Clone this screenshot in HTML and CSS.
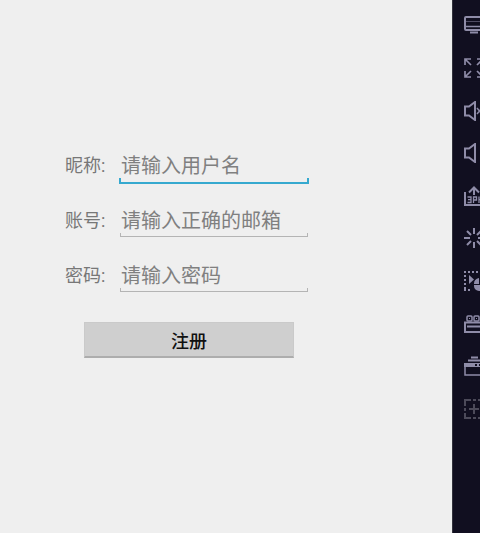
FILE: index.html
```html
<!DOCTYPE html>
<html lang="zh-CN">

<head>
  <meta charset="utf-8">
  <title>注册</title>
  <link rel="stylesheet" href="styles.css">
</head>

<body>
  <main class="screen">
    <form class="register">
      <div class="row">
        <label for="nickname">昵称:</label>
        <input class="active" type="text" id="nickname" name="nickname" placeholder="请输入用户名">
      </div>
      <div class="row">
        <label for="account">账号:</label>
        <input type="email" id="account" name="account" placeholder="请输入正确的邮箱">
      </div>
      <div class="row">
        <label for="password">密码:</label>
        <input type="password" id="password" name="password" placeholder="请输入密码">
      </div>
      <button class="submit" type="submit">注册</button>
    </form>
  </main>

  <!-- emulator toolbar -->
  <nav class="toolbar">
    <button class="tool" type="button" aria-label="键盘">
      <svg viewBox="0 0 20 20"><rect x="1" y="2" width="18" height="13" rx="1"/><path d="M2 6.500h16" stroke-width="1" opacity="0.5"/><path d="M2 11.500h16" stroke-width="1.500"/><path d="M6 17.500h8"/></svg>
    </button>
    <button class="tool" type="button" aria-label="全屏">
      <svg viewBox="0 0 20 20"><path d="M1 7V1h6M1 1l6 6M13 1h6v6M19 1l-6 6M1 13v6h6M1 19l6-6M19 13v6h-6M19 19l-6-6" stroke-width="1.700"/></svg>
    </button>
    <button class="tool" type="button" aria-label="音量加">
      <svg viewBox="0 0 20 20"><path d="M1 5.500h4l6-4.500v18l-6-4.500H1z"/><path d="M13 7l5 6M18 7l-5 6" stroke-width="1.500"/></svg>
    </button>
    <button class="tool" type="button" aria-label="音量减">
      <svg viewBox="0 0 20 20"><path d="M1 5.500h4l6-4.500v18l-6-4.500H1z"/><path d="M17 10h3"/></svg>
    </button>
    <button class="tool" type="button" aria-label="安装应用">
      <svg viewBox="0 0 20 20"><path d="M1 6v13h18V6M10 9V2M5 6.500L10 1.500l5 5"/><path d="M3.500 11H7v5.500H3.500M4 13.700h3M9.500 17v-6h3v3h-3M15 10.500V17M15 13.700h3.500" stroke-width="1.300"/></svg>
    </button>
    <button class="tool" type="button" aria-label="刷新">
      <svg viewBox="0 0 20 20"><path d="M10 0v6M10 14v6M0 10h6M14 10h6M3 3l4 4M17 3l-4 4M3 17l4-4M17 17l-4-4"/></svg>
    </button>
    <button class="tool" type="button" aria-label="录制操作">
      <svg viewBox="0 0 20 20"><path d="M0 1h20M0 19h8" stroke-dasharray="2 2"/><path d="M1 4v14" stroke-dasharray="2 2"/><path class="solid" d="M5 4l5 4.500L5 13z"/><path class="solid" d="M15 7v6h-5a6 6 0 0 1 5-6zM10 14h10v1a5 5 0 0 1-10 0zM16 7a6 6 0 0 1 4 6h-4z"/></svg>
    </button>
    <button class="tool" type="button" aria-label="录像">
      <svg viewBox="0 0 20 20"><rect x="3" y="2" width="5" height="5" rx="1" stroke-width="1.500"/><rect x="10" y="2" width="5" height="5" rx="1" stroke-width="1.500"/><path d="M5 4.500h1M12 4.500h1" stroke-width="1"/><path d="M1 8.500h18V18H1z"/><path d="M3 12.500h14" stroke-width="2"/></svg>
    </button>
    <button class="tool" type="button" aria-label="多开">
      <svg viewBox="0 0 20 20"><path d="M7 1.500h7M4 4.500h13"/><path class="solid" d="M0 7h20v4H0z"/><path d="M1 8v11h18V8" stroke-width="1.500"/><path class="dot" d="M11 8h2v2h-2zM15 8h2v2h-2z"/></svg>
    </button>
    <button class="tool" type="button" aria-label="截图" disabled>
      <svg viewBox="0 0 20 20"><path d="M1 7V1h6M9 1h3M14 1h5v6M1 9v3M1 14v5h6M9 19h3M14 19h5v-5M19 9v3M10 5v10M5 10h10"/></svg>
    </button>
  </nav>
</body>

</html>
```

FILE: styles.css
```css
* {
  box-sizing: border-box;
}

body {
  display: flex;
  min-height: 100vh;
  margin: 0;
  background-color: #efefef;
  font-family: Roboto, "Noto Sans CJK SC", sans-serif;
}

.screen {
  flex: 1;
  padding: 148px 20px 20px 65px;
}

.register {
  display: flex;
  flex-direction: column;
  gap: 19px;
  max-width: 244px;
}

.row {
  display: flex;
  align-items: center;
}

.row label {
  flex: 0 0 54px;
  color: #777777;
  font-size: 18px;
  line-height: 36px;
}

/* thin underline with a short tick at each end */
.row input {
  flex: 1;
  min-width: 0;
  height: 36px;
  padding: 0 1px;
  border: 1px solid transparent;
  border-bottom-width: 2px;
  outline: none;
  background:
    linear-gradient(#b4b4b4, #b4b4b4) left bottom / 100% 1px no-repeat,
    linear-gradient(#b4b4b4, #b4b4b4) left bottom / 1px 4px no-repeat,
    linear-gradient(#b4b4b4, #b4b4b4) right bottom / 1px 4px no-repeat;
  color: #222222;
  font-family: inherit;
  font-size: 20px;
}

.row input::placeholder {
  color: #808080;
  opacity: 1;
}

.row input.active,
.row input:focus {
  padding: 0 2px;
  border: 0;
  background:
    linear-gradient(#36a9cf, #36a9cf) left bottom / 100% 2px no-repeat,
    linear-gradient(#36a9cf, #36a9cf) left bottom / 2px 6px no-repeat,
    linear-gradient(#36a9cf, #36a9cf) right bottom / 2px 6px no-repeat;
}

.submit {
  height: 36px;
  margin: 9px 15px 0 19px;
  border: 1px solid #cacaca;
  border-bottom: 2px solid #adadad;
  background-color: #cfcfcf;
  color: #111111;
  font-family: inherit;
  font-size: 18px;
  font-weight: 500;
}

.toolbar {
  flex: 0 0 28px;
  padding-top: 4px;
  overflow: hidden;
  border-left: 1px solid #33333d;
  background-color: #110f20;
}

.tool {
  display: flex;
  align-items: center;
  height: 8vh;
  padding: 0 0 0 11px;
  border: 0;
  background: none;
  color: #8f8ca8;
}

.tool:disabled {
  color: #4c4a59;
}

.tool svg {
  flex: none;
  width: 20px;
  height: 20px;
  fill: none;
  stroke: currentColor;
  stroke-width: 2;
}

.tool .solid {
  fill: currentColor;
  stroke: none;
}

.tool .dot {
  fill: #110f20;
  stroke: none;
}
```
